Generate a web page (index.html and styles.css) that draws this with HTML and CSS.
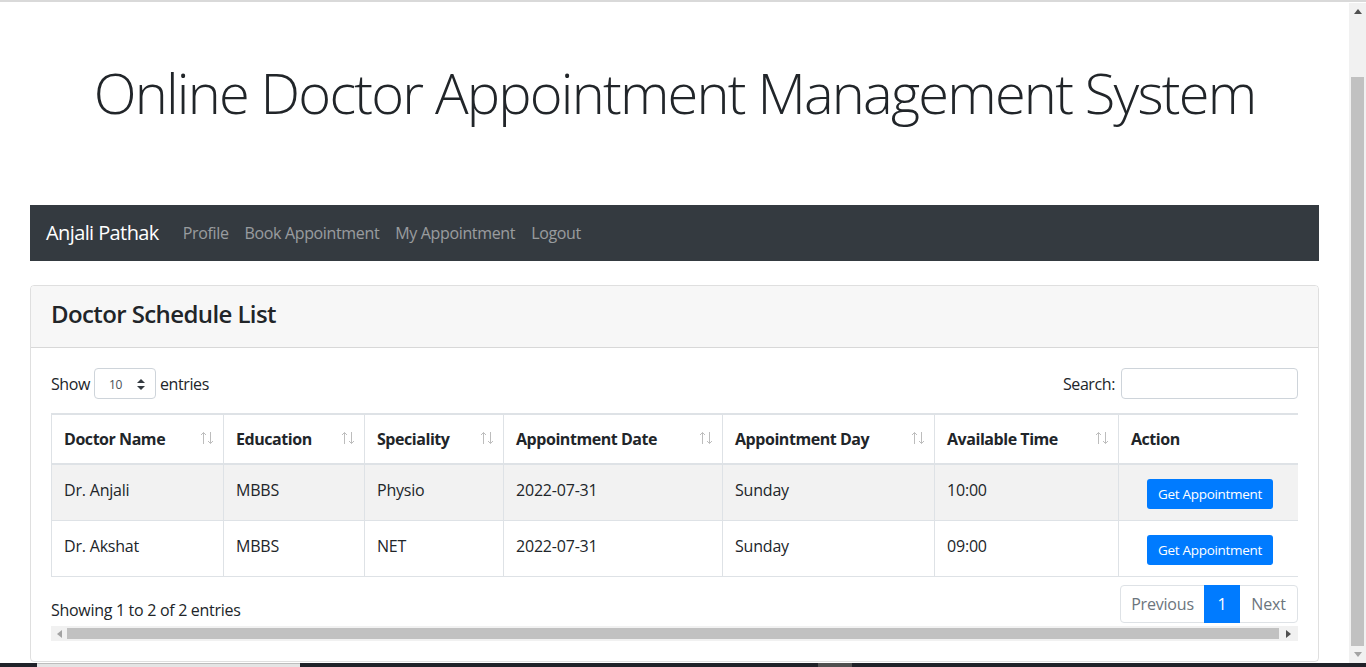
FILE: index.html
```html
<!DOCTYPE html>
<html lang="en">
<head>
<meta charset="utf-8">
<title>Online Doctor Appointment Management System</title>
<link rel="stylesheet" href="styles.css">
</head>
<body>
<div class="chrome-top"></div>
<div class="viewport">
  <div class="page">
    <header class="hero">
      <h1 class="hero-title">Online Doctor Appointment Management System</h1>
    </header>
    <nav class="navbar">
      <span class="brand">Anjali Pathak</span>
      <ul class="nav-links">
        <li>Profile</li>
        <li>Book Appointment</li>
        <li>My Appointment</li>
        <li>Logout</li>
      </ul>
    </nav>
    <section class="card">
      <div class="card-header"><h3 class="card-title">Doctor Schedule List</h3></div>
      <div class="card-body">
        <div class="dt-top">
          <div class="dt-length">Show
            <span class="select-box">10
              <svg class="select-caret" width="8" height="11" viewBox="0 0 8 11"><path d="M4 0L8 4H0Z M4 11L0 7H8Z" fill="#343a40"/></svg>
            </span>
            entries</div>
          <div class="dt-search">Search:<span class="search-input"></span></div>
        </div>
        <div class="table-clip">
          <table class="dt-table">
            <colgroup>
              <col class="c1"><col class="c2"><col class="c3"><col class="c4"><col class="c5"><col class="c6"><col class="c7">
            </colgroup>
            <thead>
              <tr>
                <th><div class="th-in"><span>Doctor Name</span><svg class="sort" width="14" height="14" viewBox="0 0 14 14"><path d="M3.5 1.5V13M1 4L3.5 1.5L6 4M10.5 1V12.5M8 10L10.5 12.5L13 10" stroke="#bdbdbd" stroke-width="1" fill="none"/></svg></div></th>
                <th><div class="th-in"><span>Education</span><svg class="sort" width="14" height="14" viewBox="0 0 14 14"><path d="M3.5 1.5V13M1 4L3.5 1.5L6 4M10.5 1V12.5M8 10L10.5 12.5L13 10" stroke="#bdbdbd" stroke-width="1" fill="none"/></svg></div></th>
                <th><div class="th-in"><span>Speciality</span><svg class="sort" width="14" height="14" viewBox="0 0 14 14"><path d="M3.5 1.5V13M1 4L3.5 1.5L6 4M10.5 1V12.5M8 10L10.5 12.5L13 10" stroke="#bdbdbd" stroke-width="1" fill="none"/></svg></div></th>
                <th><div class="th-in"><span>Appointment Date</span><svg class="sort" width="14" height="14" viewBox="0 0 14 14"><path d="M3.5 1.5V13M1 4L3.5 1.5L6 4M10.5 1V12.5M8 10L10.5 12.5L13 10" stroke="#bdbdbd" stroke-width="1" fill="none"/></svg></div></th>
                <th><div class="th-in"><span>Appointment Day</span><svg class="sort" width="14" height="14" viewBox="0 0 14 14"><path d="M3.5 1.5V13M1 4L3.5 1.5L6 4M10.5 1V12.5M8 10L10.5 12.5L13 10" stroke="#bdbdbd" stroke-width="1" fill="none"/></svg></div></th>
                <th><div class="th-in"><span>Available Time</span><svg class="sort" width="14" height="14" viewBox="0 0 14 14"><path d="M3.5 1.5V13M1 4L3.5 1.5L6 4M10.5 1V12.5M8 10L10.5 12.5L13 10" stroke="#bdbdbd" stroke-width="1" fill="none"/></svg></div></th>
                <th><div class="th-in"><span>Action</span></div></th>
              </tr>
            </thead>
            <tbody>
              <tr class="odd">
                <td>Dr. Anjali</td><td>MBBS</td><td>Physio</td><td>2022-07-31</td><td>Sunday</td><td>10:00</td>
                <td class="action"><span class="btn-primary">Get Appointment</span></td>
              </tr>
              <tr>
                <td>Dr. Akshat</td><td>MBBS</td><td>NET</td><td>2022-07-31</td><td>Sunday</td><td>09:00</td>
                <td class="action"><span class="btn-primary">Get Appointment</span></td>
              </tr>
            </tbody>
          </table>
        </div>
        <div class="dt-bottom">
          <div class="dt-info">Showing 1 to 2 of 2 entries</div>
          <ul class="pagination">
            <li class="page-item disabled">Previous</li>
            <li class="page-item active">1</li>
            <li class="page-item disabled">Next</li>
          </ul>
        </div>
        <div class="hscroll">
          <span class="hs-btn"><svg width="5" height="8" viewBox="0 0 5 8"><path d="M0 4L5 0V8Z" fill="#a3a3a3"/></svg></span>
          <span class="hs-thumb"></span>
          <span class="hs-btn hs-right"><svg width="5" height="8" viewBox="0 0 5 8"><path d="M5 4L0 0V8Z" fill="#505050"/></svg></span>
        </div>
      </div>
    </section>
  </div>
  <div class="vscroll">
    <span class="vs-btn"><svg width="8" height="5" viewBox="0 0 8 5"><path d="M4 0L8 5H0Z" fill="#505050"/></svg></span>
    <span class="vs-gap"></span>
    <span class="vs-thumb"></span>
    <span class="vs-btn"><svg width="8" height="5" viewBox="0 0 8 5"><path d="M4 5L0 0H8Z" fill="#a3a3a3"/></svg></span>
  </div>
</div>
<div class="taskbar">
  <span class="tb-seg tb-dark tb-a"></span>
  <span class="tb-seg tb-light"></span>
  <span class="tb-seg tb-dark tb-b"></span>
  <span class="tb-seg tb-mid"></span>
  <span class="tb-seg tb-dark tb-c"></span>
</div>
</body>
</html>
```
FILE: styles.css
```css
* { box-sizing: border-box; }
html, body { margin: 0; padding: 0; }
body {
  width: 1366px;
  height: 667px;
  overflow: hidden;
  font-family: "Open Sans", "Noto Sans", sans-serif;
  font-size: 16px;
  line-height: 24px;
  color: #212529;
  background: #fff;
}
.chrome-top {
  height: 3px;
  background: #fff;
  border-top: 2px solid #d9d9d9;
}
.viewport {
  display: flex;
  height: 660px;
}
.page {
  flex: 1;
  padding: 0 30px;
  overflow: hidden;
}
.hero {
  height: 202px;
  padding-top: 56px;
}
.hero-title {
  margin: 0;
  font-size: 56px;
  line-height: 67px;
  font-weight: 300;
  text-align: center;
  color: #212529;
  letter-spacing: -1.8px;
}
.navbar {
  height: 56px;
  background: #343a40;
  display: flex;
  align-items: center;
  padding: 0 16px;
}
.brand {
  font-size: 20px;
  color: #fff;
  margin-right: 16px;
  letter-spacing: -0.6px;
}
.nav-links {
  display: flex;
  list-style: none;
  margin: 0;
  padding: 0;
}
.nav-links li {
  padding: 0 8px;
  color: rgba(255,255,255,.5);
  letter-spacing: -0.35px;
}
.card {
  margin-top: 24px;
  border: 1px solid rgba(0,0,0,.125);
  border-radius: 4px;
}
.card-header {
  height: 62px;
  background: #f7f7f7;
  border-bottom: 1px solid rgba(0,0,0,.125);
  border-radius: 3px 3px 0 0;
  display: flex;
  align-items: center;
  padding: 0 20px 5px;
}
.card-title {
  margin: 0;
  font-size: 24px;
  font-weight: 600;
  line-height: 30px;
  letter-spacing: -0.6px;
}
.card-body {
  padding: 20px;
}
.dt-top {
  display: flex;
  justify-content: space-between;
  align-items: center;
  height: 31px;
}
.dt-length, .dt-search {
  display: flex;
  align-items: center;
  letter-spacing: -0.4px;
}
.select-box {
  display: inline-flex;
  align-items: center;
  justify-content: space-between;
  width: 62px;
  height: 31px;
  margin: 0 4px 0 4px;
  padding: 2px 10px 0 14px;
  border: 1px solid #ced4da;
  border-radius: 4px;
  font-size: 12px;
  color: #495057;
}
.search-input {
  display: inline-block;
  width: 177px;
  height: 31px;
  margin-left: 6px;
  border: 1px solid #ced4da;
  border-radius: 4px;
}
.table-clip {
  margin-top: 14px;
  width: 1247px;
  overflow: hidden;
}
.dt-table {
  width: 1250px;
  table-layout: fixed;
  border-collapse: collapse;
}
.c1 { width: 172px; }
.c2 { width: 141px; }
.c3 { width: 139px; }
.c4 { width: 219px; }
.c5 { width: 212px; }
.c6 { width: 184px; }
.c7 { width: 183px; }
.dt-table th, .dt-table td {
  border: 1px solid #dee2e6;
  padding: 12px;
  text-align: left;
  vertical-align: top;
  letter-spacing: -0.2px;
}
.dt-table th {
  border-top: 2px solid #dee2e6;
  border-bottom: 2px solid #dee2e6;
  font-weight: 700;
  padding: 12px;
  letter-spacing: -0.45px;
}
.th-in {
  display: flex;
  justify-content: space-between;
  align-items: center;
  height: 24px;
}
.sort {
  margin-right: -3px;
  margin-top: -3px;
}
.dt-table td {
  height: 56px;
  padding-top: 13px;
  padding-bottom: 11px;
}
.dt-table tr.odd td {
  background: #f2f2f2;
}
.dt-table td.action {
  text-align: center;
  padding: 14px 12px 11px;
}
.btn-primary {
  display: inline-flex;
  align-items: center;
  justify-content: center;
  width: 126px;
  height: 30px;
  background: #007bff;
  color: #fff;
  border-radius: 3px;
  font-size: 13.5px;
  letter-spacing: -0.3px;
}
.dt-bottom {
  display: flex;
  justify-content: space-between;
  align-items: flex-start;
  margin-top: 8px;
}
.dt-info {
  padding-top: 13px;
  letter-spacing: -0.3px;
}
.pagination {
  display: flex;
  list-style: none;
  margin: 0;
  padding: 0;
}
.page-item {
  height: 38px;
  display: flex;
  align-items: center;
  justify-content: center;
  border: 1px solid #dee2e6;
  letter-spacing: -0.2px;
}
.page-item + .page-item { margin-left: -1px; }
.page-item:first-child { border-radius: 4px 0 0 4px; width: 85px; }
.page-item:last-child { border-radius: 0 4px 4px 0; width: 59px; }
.page-item.disabled { color: #6c757d; }
.page-item.active {
  width: 36px;
  background: #007bff;
  border-color: #007bff;
  color: #fff;
  position: relative;
}
.hscroll {
  display: flex;
  height: 15px;
  margin-top: 3px;
  background: #f1f1f1;
}
.hs-btn {
  width: 16px;
  display: flex;
  align-items: center;
  justify-content: center;
}
.hs-right { width: 19px; }
.hs-thumb {
  flex: 1;
  background: #c1c1c1;
  margin: 2px 0;
}
.vscroll {
  width: 17px;
  background: #f1f1f1;
  display: flex;
  flex-direction: column;
}
.vs-btn {
  height: 17px;
  display: flex;
  align-items: center;
  justify-content: center;
}
.vs-gap { height: 57px; }
.vs-thumb {
  flex: 1;
  background: #c1c1c1;
  margin: 0 2px;
}
.taskbar {
  display: flex;
  height: 4px;
}
.tb-seg { display: block; height: 4px; }
.tb-dark { background: #202229; }
.tb-a { width: 37px; }
.tb-light { width: 263px; background: #e4e4e4; border-top: 1px solid #bdbdbd; }
.tb-b { width: 518px; }
.tb-mid { width: 34px; background: #505050; }
.tb-c { flex: 1; }
```
